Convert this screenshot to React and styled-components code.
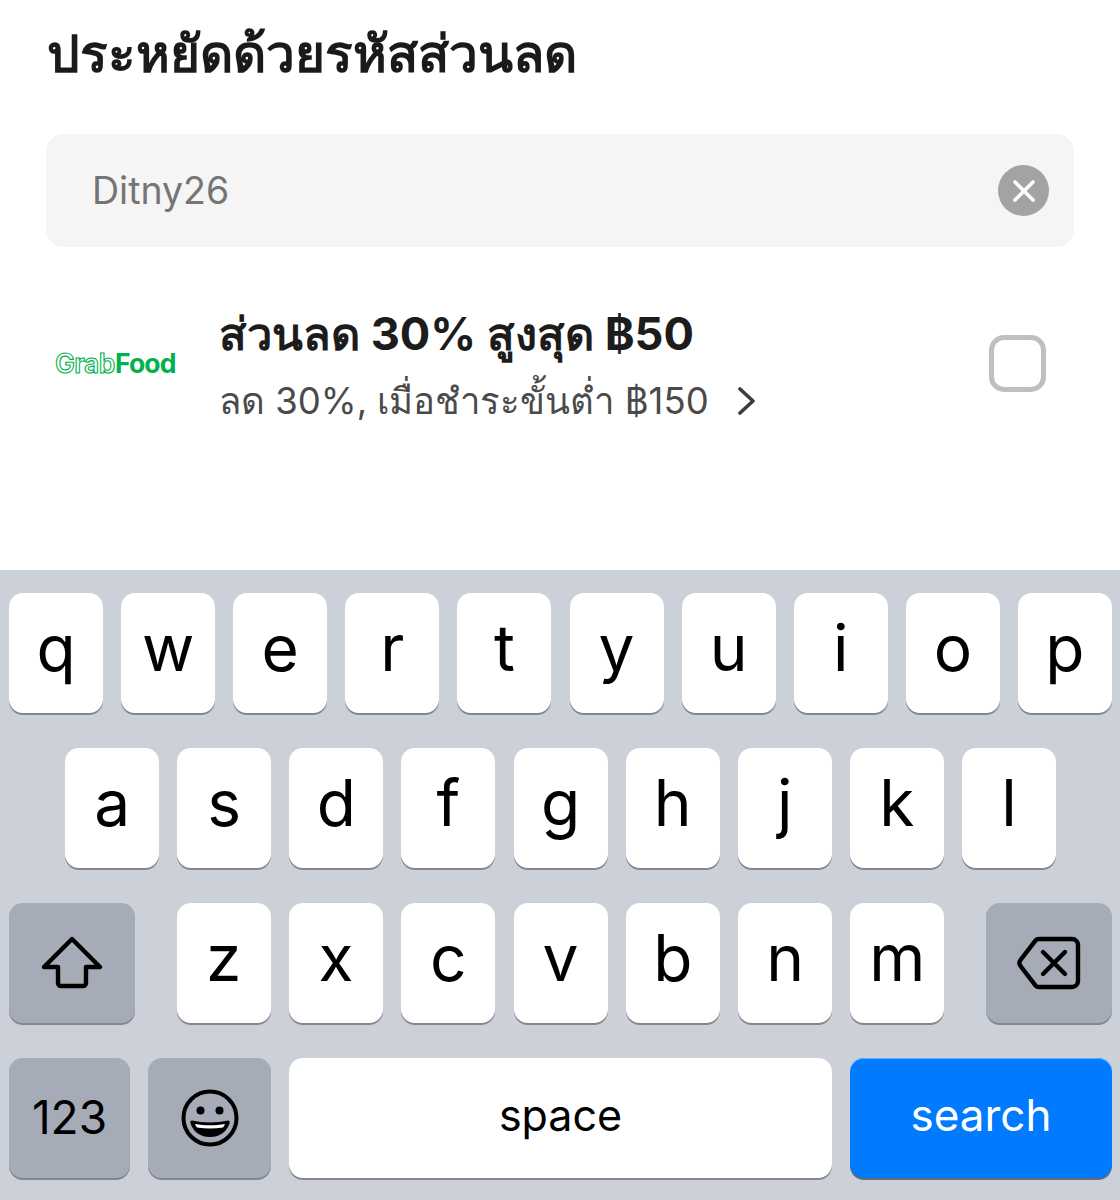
import React from 'react';
import styled, { createGlobalStyle } from 'styled-components';

const GlobalStyle = createGlobalStyle`
  html, body {
    margin: 0;
    padding: 0;
    background: #fff;
  }
  body {
    font-family: Inter, "Noto Sans", "DejaVu Sans", sans-serif;
    -webkit-font-smoothing: antialiased;
  }
`;

const Screen = styled.div`
  width: 1120px;
  height: 1200px;
  display: flex;
  flex-direction: column;
  overflow: hidden;
`;

const Sheet = styled.div`
  height: 570px;
  box-sizing: border-box;
  padding: 24px 46px 0;
`;

const Title = styled.h1`
  margin: 0 0 50px 1px;
  height: 60px;
  line-height: 58px;
  font-size: 51.300px;
  font-weight: 700;
  color: #1a1a1a;
  white-space: nowrap;
`;

const SearchField = styled.div`
  height: 113px;
  box-sizing: border-box;
  display: flex;
  align-items: center;
  justify-content: space-between;
  padding: 0 25px 0 46px;
  background: #f5f5f5;
  border-radius: 18px;
`;

const SearchValue = styled.span`
  font-size: 37.500px;
  color: #757575;
`;

const ClearButton = styled.span`
  width: 51px;
  height: 51px;
  border-radius: 50%;
  background: #a3a3a3;
  display: flex;
  align-items: center;
  justify-content: center;
`;

const Promo = styled.div`
  margin-top: 58px;
  display: flex;
  align-items: center;
`;

const GrabLogo = styled.div`
  width: 173px;
  box-sizing: border-box;
  padding: 0 0 4px 9px;
  font-size: 26.500px;
  line-height: 30px;
  color: #00b14f;
  white-space: nowrap;
`;

const GrabOutline = styled.span`
  font-weight: 600;
  letter-spacing: -0.5px;
  color: #fff;
  -webkit-text-stroke: 1.100px #00b14f;
`;

const GrabBold = styled.span`
  font-weight: 700;
  letter-spacing: -0.8px;
`;

const PromoText = styled.div`
  flex: 1;
  display: flex;
  flex-direction: column;
  gap: 14px;
`;

const PromoTitle = styled.div`
  font-size: 45.200px;
  line-height: 58px;
  font-weight: 700;
  color: #1c1c1c;
  white-space: nowrap;
`;

const PromoDetail = styled.div`
  display: flex;
  align-items: center;
  gap: 29px;
  font-size: 36.500px;
  line-height: 48px;
  color: #4a4a4a;
  white-space: nowrap;
`;

const Checkbox = styled.span`
  width: 57px;
  height: 57px;
  margin: 0 28px 4px 0;
  box-sizing: border-box;
  border: 5px solid #bfbfbf;
  border-radius: 15px;
`;

const Keyboard = styled.div`
  flex: 1;
  box-sizing: border-box;
  padding: 23px 8px 0 9px;
  background: #ccd0d8;
  display: flex;
  flex-direction: column;
  gap: 35px;
`;

const KeyRow = styled.div`
  display: flex;
  justify-content: ${p => p.$justify || 'center'};
  gap: ${p => (p.$justify ? '0' : '18.100px')};
`;

const KeyGroup = styled.div`
  display: flex;
  gap: ${p => p.$gap || 18}px;
`;

const Key = styled.div`
  flex: ${p => (p.$grow ? '1' : 'none')};
  width: ${p => (p.$grow ? 'auto' : `${p.$width || 94}px`)};
  height: 120px;
  display: flex;
  align-items: center;
  justify-content: center;
  border-radius: 14px;
  background: ${p => p.$bg || '#fff'};
  color: ${p => p.$color || '#000'};
  font-size: ${p => p.$size || 64}px;
  box-shadow: ${p => p.$shadow || '0 2px 0 #85878d'};
`;

const CharLabel = styled.span`
  position: relative;
  top: ${p => p.$lift || -6}px;
`;

const ROW_1 = ['q', 'w', 'e', 'r', 't', 'y', 'u', 'i', 'o', 'p'];
const ROW_2 = ['a', 's', 'd', 'f', 'g', 'h', 'j', 'k', 'l'];
const ROW_3 = ['z', 'x', 'c', 'v', 'b', 'n', 'm'];
const FN_KEY = '#a5abb7';

const ClearIcon = () => (
  <svg width="24" height="24" viewBox="0 0 24 24" fill="none" stroke="#fff" strokeWidth="3.600" strokeLinecap="round">
    <path d="M3 3l18 18M21 3L3 21" />
  </svg>
);

const ChevronIcon = () => (
  <svg width="18" height="28" viewBox="0 0 18 28" fill="none" stroke="#3c3c3c" strokeWidth="3.600" strokeLinecap="round" strokeLinejoin="round">
    <path d="M2 2l13 12L2 26" />
  </svg>
);

const ShiftIcon = () => (
  <svg width="62" height="54" viewBox="0 0 62 54" fill="none" stroke="#000" strokeWidth="4.400" strokeLinejoin="round">
    <path d="M31 3L59 31H45V47a3 3 0 0 1-3 3H20a3 3 0 0 1-3-3V31H3Z" />
  </svg>
);

const DeleteIcon = () => (
  <svg width="64" height="54" viewBox="0 0 64 54" fill="none" stroke="#000" strokeWidth="4.400" strokeLinejoin="round" strokeLinecap="round">
    <path d="M22 3H55a6 6 0 0 1 6 6V45a6 6 0 0 1-6 6H22a5 5 0 0 1-3.600-1.600L3.500 30a5 5 0 0 1 0-6L18.400 4.600A5 5 0 0 1 22 3Z" />
    <path d="M26 16l22 22M48 16L26 38" />
  </svg>
);

const EmojiIcon = () => (
  <svg width="58" height="58" viewBox="0 0 58 58">
    <circle cx="29" cy="29" r="26.500" fill="none" stroke="#000" strokeWidth="4" />
    <circle cx="19.500" cy="21.500" r="4" fill="#000" />
    <circle cx="38.500" cy="21.500" r="4" fill="#000" />
    <path d="M11 31.500c11 2.500 25 2.500 36 0 1.500 0 2 1 1.600 2.400C46 43 38 48 29 48S12 43 9.400 33.900c-.4-1.400.1-2.400 1.600-2.400Z" fill="#000" />
    <path d="M14 35c9.500 1.800 20.500 1.800 30 0-.6 1.600-1.200 2.600-2 3.500-8.500 1.200-17.500 1.200-26 0-.8-.9-1.400-1.900-2-3.500Z" fill="#fff" />
  </svg>
);

export default function App() {
  return (
    <Screen>
      <GlobalStyle />
      <Sheet>
        <Title>ประหยัดด้วยรหัสส่วนลด</Title>
        <SearchField>
          <SearchValue>Ditny26</SearchValue>
          <ClearButton><ClearIcon /></ClearButton>
        </SearchField>
        <Promo>
          <GrabLogo>
            <GrabOutline>Grab</GrabOutline>
            <GrabBold>Food</GrabBold>
          </GrabLogo>
          <PromoText>
            <PromoTitle>ส่วนลด 30% สูงสุด ฿50</PromoTitle>
            <PromoDetail>
              <span>ลด 30%, เมื่อชำระขั้นต่ำ ฿150</span>
              <ChevronIcon />
            </PromoDetail>
          </PromoText>
          <Checkbox />
        </Promo>
      </Sheet>
      <Keyboard>
        <KeyRow>
          {ROW_1.map(c => <Key key={c}><CharLabel>{c}</CharLabel></Key>)}
        </KeyRow>
        <KeyRow>
          {ROW_2.map(c => <Key key={c}><CharLabel>{c}</CharLabel></Key>)}
        </KeyRow>
        <KeyRow $justify="space-between">
          <Key $width={126} $bg={FN_KEY}><ShiftIcon /></Key>
          <KeyGroup $gap={18.3}>
            {ROW_3.map(c => <Key key={c}><CharLabel>{c}</CharLabel></Key>)}
          </KeyGroup>
          <Key $width={126} $bg={FN_KEY}><DeleteIcon /></Key>
        </KeyRow>
        <KeyGroup>
          <Key $width={121} $bg={FN_KEY} $size={46}><CharLabel $lift={-1}>123</CharLabel></Key>
          <Key $width={123} $bg={FN_KEY}><EmojiIcon /></Key>
          <Key $grow $size={43}><CharLabel $lift={-3}>space</CharLabel></Key>
          <Key
            $width={262}
            $bg="#007aff"
            $color="#fff"
            $size={44}
            $shadow="0 2px 0 #6a6c72, inset 0 1px 0 #5cb0ff"
          >
            <CharLabel $lift={-3}>search</CharLabel>
          </Key>
        </KeyGroup>
      </Keyboard>
    </Screen>
  );
}
